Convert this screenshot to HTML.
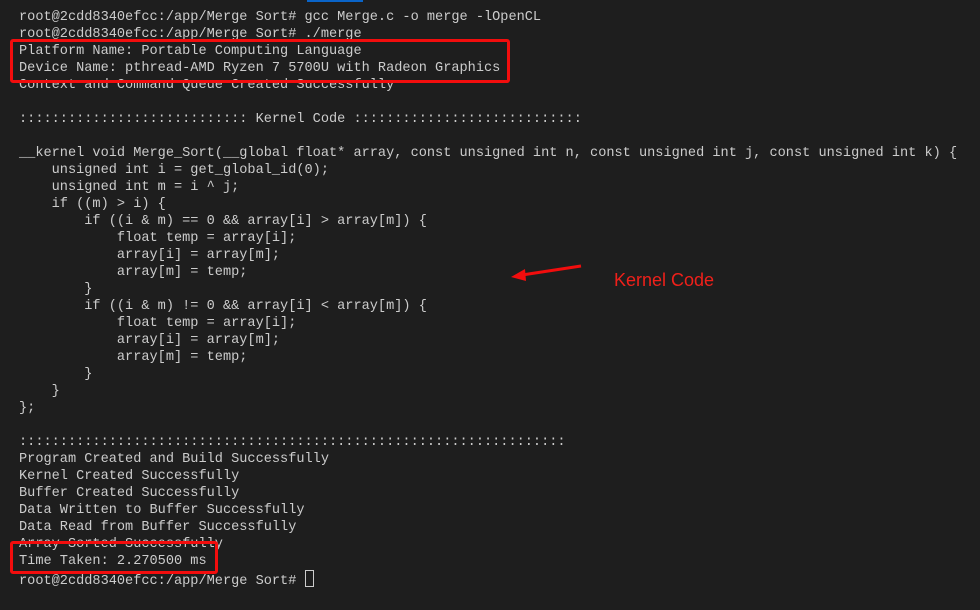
<!DOCTYPE html>
<html><head><style>
body{margin:0;width:980px;height:610px;background:#1e1e1e;overflow:hidden;position:relative}
pre{position:absolute;left:19px;top:9px;margin:0;font-family:"Liberation Mono",monospace;font-size:13.6px;line-height:17px;color:#cccccc}
.box{position:absolute;border:3px solid #f20d0d;border-radius:3px}
</style></head><body>
<div style="position:absolute;left:307px;top:0;width:56px;height:2px;background:#0a64c8"></div>
<pre>root@2cdd8340efcc:/app/Merge Sort# gcc Merge.c -o merge -lOpenCL
root@2cdd8340efcc:/app/Merge Sort# ./merge
Platform Name: Portable Computing Language
Device Name: pthread-AMD Ryzen 7 5700U with Radeon Graphics
Context and Command Queue Created Successfully

:::::::::::::::::::::::::::: Kernel Code ::::::::::::::::::::::::::::

__kernel void Merge_Sort(__global float* array, const unsigned int n, const unsigned int j, const unsigned int k) {
    unsigned int i = get_global_id(0);
    unsigned int m = i ^ j;
    if ((m) > i) {
        if ((i &amp; m) == 0 &amp;&amp; array[i] &gt; array[m]) {
            float temp = array[i];
            array[i] = array[m];
            array[m] = temp;
        }
        if ((i &amp; m) != 0 &amp;&amp; array[i] &lt; array[m]) {
            float temp = array[i];
            array[i] = array[m];
            array[m] = temp;
        }
    }
};

:::::::::::::::::::::::::::::::::::::::::::::::::::::::::::::::::::
Program Created and Build Successfully
Kernel Created Successfully
Buffer Created Successfully
Data Written to Buffer Successfully
Data Read from Buffer Successfully
Array Sorted Successfully
Time Taken: 2.270500 ms
root@2cdd8340efcc:/app/Merge Sort# <span style="display:inline-block;width:7px;height:15px;border:1px solid #ccc;vertical-align:-3px"></span></pre>
<div class="box" style="left:10px;top:39px;width:494px;height:38px"></div>
<div class="box" style="left:10px;top:541px;width:202px;height:27px"></div>
<svg style="position:absolute;left:0;top:0" width="980" height="610">
<line x1="581" y1="266" x2="522" y2="275" stroke="#f20d0d" stroke-width="3"/>
<polygon points="511,277 525,269 526,281" fill="#f20d0d"/>
</svg>
<div style="position:absolute;left:614px;top:270px;font-family:'Liberation Sans',sans-serif;font-size:18px;color:#f0201a">Kernel Code</div>
</body></html>
